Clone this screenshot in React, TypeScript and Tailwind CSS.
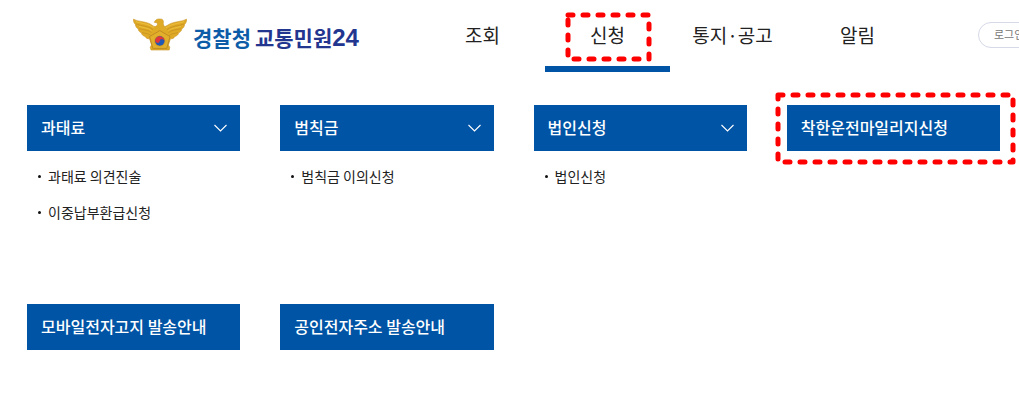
import React from "react";

type MenuGroup = {
  title: string;
  expandable?: boolean;
  highlighted?: boolean;
  items: string[];
};

const navItems = ["조회", "신청", "통지·공고", "알림"];

const groups: MenuGroup[] = [
  { title: "과태료", expandable: true, items: ["과태료 의견진술", "이중납부환급신청"] },
  { title: "범칙금", expandable: true, items: ["범칙금 이의신청"] },
  { title: "법인신청", expandable: true, items: ["법인신청"] },
  { title: "착한운전마일리지신청", highlighted: true, items: [] },
  { title: "모바일전자고지 발송안내", items: [] },
  { title: "공인전자주소 발송안내", items: [] },
];

function Emblem() {
  return (
    <svg width="54" height="34" viewBox="0 0 54 34" aria-hidden="true" className="shrink-0">
      <path
        d="M0.4 2.2 C5 4.6 11 4.4 16 6.4 C19 7.8 20.6 9.8 22.4 9.6 L24.6 8 L24 5.6 L21.4 5.4 C21.8 3.4 23.6 2 26 2 L29 2.2 C30.6 3.2 30.6 5 30.2 7 L31.4 9.6 C33 9.6 35 7.6 38 6.4 C43 4.5 49 4.6 53.6 2.2 C53.8 4.8 52.4 6.6 51.6 7.4 C51.6 9.6 50 11.2 48.8 11.8 C48.8 13.8 47 15.4 45.6 15.8 C45.4 17.8 43.4 19.2 41.8 19.4 C41.2 21.2 39.4 22 37.4 21.8 L35.4 28 L36.8 30.2 L36.2 33 L18 33 L17.2 30.2 L18.6 28 L16.6 21.8 C14.6 22 12.8 21.2 12.2 19.4 C10.6 19.2 8.6 17.8 8.4 15.8 C7 15.4 5.2 13.8 5.2 11.8 C4 11.2 2.4 9.6 2.4 7.4 C1.6 6.6 0.2 4.8 0.4 2.2 Z"
        fill="#dfaa25"
        stroke="#cb9427"
        strokeWidth="0.6"
      />
      <path
        d="M3 7 C9 9.2 15 8.8 20 12.5 M5.8 11.6 C11 13.2 15 12.6 18.5 15.5 M9 15.6 C13 16.6 15.4 16.4 17.6 18.4 M51 7 C45 9.2 39 8.8 34 12.5 M48.2 11.6 C43 13.2 39 12.6 35.5 15.5 M45 15.6 C41 16.6 38.6 16.4 36.4 18.4"
        fill="none"
        stroke="#c08a22"
        strokeWidth="0.6"
      />
      <path d="M3 4.6 C10 7 16 6.8 21 11 M51 4.6 C44 7 38 6.8 33 11 M6 9.4 C11 11 15 10.8 18.5 13.5 M48 9.4 C43 11 39 10.8 35.5 13.5" fill="none" stroke="#f0c548" strokeWidth="0.7" />
      <path
        d="M26.8 13.6 L37 19.6 L33.8 31.4 L19.8 31.4 L16.6 19.6 Z"
        fill="#e3b02c"
        stroke="#b98320"
        strokeWidth="0.8"
        strokeLinejoin="round"
      />
      <circle cx="26.8" cy="24" r="5.6" fill="#d29c22" />
      <circle cx="26.8" cy="24" r="4.7" fill="#1f59b5" />
      <path
        d="M22.1 24 A4.7 4.7 0 0 1 31.5 24 A2.35 2.35 0 0 0 26.8 24 A2.35 2.35 0 0 1 22.1 24 Z"
        fill="#e2353a"
        transform="rotate(12 26.8 24)"
      />
    </svg>
  );
}

function DashedFrame({ width, height, className }: { width: number; height: number; className: string }) {
  return (
    <svg
      width={width}
      height={height}
      viewBox={`0 0 ${width} ${height}`}
      aria-hidden="true"
      className={`pointer-events-none absolute max-w-none ${className}`}
    >
      <path
        d={`M3 3 H${width - 3} V${height - 3} H3 Z`}
        fill="none"
        stroke="#ff0000"
        strokeWidth="5"
        strokeLinecap="round"
        strokeLinejoin="round"
        strokeDasharray="5 10"
      />
    </svg>
  );
}

function Header() {
  return (
    <header className="flex h-[72px] overflow-hidden">
      <a href="#home" className="flex w-[420px] shrink-0 items-center gap-[6px] pb-1 pl-[133px]">
        <Emblem />
        <span className="flex items-baseline gap-1 pt-[6px] text-[21px] leading-[30px] font-bold whitespace-nowrap">
          <span className="text-[#0d5ca8]">경찰청</span>
          <span className="text-[#22358f]">
            교통민원
            <span className="font-['Liberation_Sans',sans-serif] text-2xl leading-[30px]">24</span>
          </span>
        </span>
      </a>
      <nav className="flex shrink-0">
        {navItems.map((label) => {
          const active = label === "신청";
          return (
            <a
              key={label}
              href="#menu"
              aria-current={active ? "page" : undefined}
              className={`relative flex w-[125px] items-center justify-center border-b-[6px] pt-1 text-[19px] leading-7 text-[#222] ${
                active ? "border-[#0054a6]" : "border-transparent"
              }`}
            >
              {label}
              {active && <DashedFrame width={87} height={50} className="top-3 left-5" />}
            </a>
          );
        })}
      </nav>
      <button
        type="button"
        className="mt-[22px] ml-[58px] h-[26px] shrink-0 rounded-full border border-[#d5d9e8] px-[15px] pb-[2px] text-[11px] leading-4 text-[#777]"
      >
        로그인
      </button>
    </header>
  );
}

function MenuCard({ group }: { group: MenuGroup }) {
  return (
    <section>
      <div className="relative">
        <button
          type="button"
          className="flex h-[46px] w-full items-center justify-between bg-[#0054a6] pr-[13px] pl-[14px] text-left text-base font-medium whitespace-nowrap text-white"
        >
          <span className="pb-[2px]">{group.title}</span>
          {group.expandable && (
            <svg width="13" height="8" viewBox="0 0 13 8" aria-hidden="true">
              <path d="M0.5 1 L6.5 7 L12.5 1" fill="none" stroke="#ffffff" strokeWidth="1.1" />
            </svg>
          )}
        </button>
        {group.highlighted && <DashedFrame width={241} height={73} className="-top-[13px] -left-3" />}
      </div>
      {group.items.length > 0 && (
        <ul className="pt-2 pl-[11px]">
          {group.items.map((item) => (
            <li key={item} className="flex h-9 items-center gap-[7px] pb-[2px]">
              <span className="size-[3px] shrink-0 rounded-full bg-[#111]" />
              <a href="#item" className="text-sm text-[#222]">
                {item}
              </a>
            </li>
          ))}
        </ul>
      )}
    </section>
  );
}

export default function App() {
  return (
    <div className="overflow-x-hidden bg-white font-['Noto_Sans_CJK_KR','Noto_Sans',sans-serif]">
      <Header />
      <main className="grid grid-cols-4 gap-x-10 gap-y-[73px] pt-[33px] pr-[19px] pb-[58px] pl-[27px]">
        {groups.map((group) => (
          <MenuCard key={group.title} group={group} />
        ))}
      </main>
    </div>
  );
}
